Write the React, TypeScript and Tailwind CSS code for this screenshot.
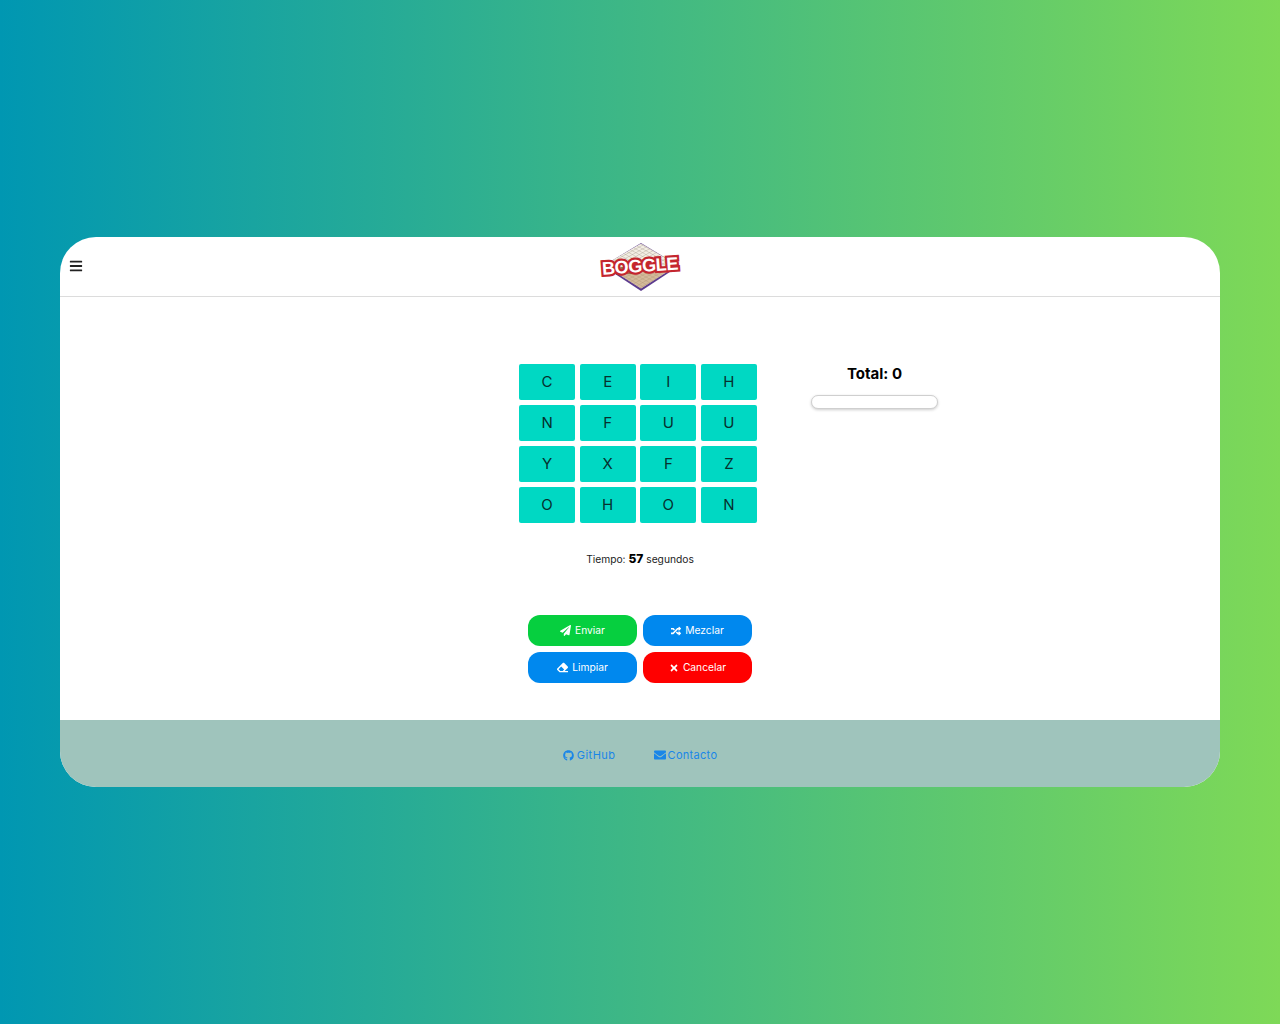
import { FaBars, FaEnvelope, FaEraser, FaGithub, FaPaperPlane, FaRandom, FaTimes } from 'react-icons/fa'

const letters = ['C', 'E', 'I', 'H', 'N', 'F', 'U', 'U', 'Y', 'X', 'F', 'Z', 'O', 'H', 'O', 'N']

function BoggleLogo() {
  return (
    <div className="relative h-[52px] w-[90px]">
      <svg width="90" height="52" viewBox="0 0 90 52" aria-hidden="true">
        <defs>
          <pattern id="weave" width="3.4" height="3.4" patternUnits="userSpaceOnUse" patternTransform="matrix(1 0.55 -1 0.55 0 0)">
            <rect width="3.4" height="3.4" fill="#f3eee4" />
            <path d="M0 0H3.4M0 0V3.4" stroke="#a89f90" strokeWidth="0.7" />
          </pattern>
        </defs>
        <polygon points="46,2 84,25 46,50 8,25" fill="#5c3b8e" />
        <polygon points="46,2.6 83,24 46,47.6 9,24" fill="url(#weave)" />
        <polygon points="14,27 78,27 46,47.6" fill="#b98f5f" opacity="0.55" />
        <polygon points="14,26 30,26 40,33 24,33" fill="#7d5230" opacity="0.7" />
      </svg>
      <span className="absolute inset-x-0 top-[14px] -rotate-[4deg] text-center font-['Liberation_Sans',sans-serif] text-[18px] leading-[22px] font-bold tracking-[-0.3px] text-white [-webkit-text-stroke:4.5px_#c4262e] [paint-order:stroke_fill]">
        BOGGLE
      </span>
    </div>
  )
}

export default function App() {
  return (
    <div className="flex min-h-[1024px] items-center justify-center bg-[linear-gradient(90deg,#0097b2,#7ed957)] px-[60px] font-['Inter',sans-serif] text-black">
      <div className="flex h-[550px] w-full flex-col overflow-hidden rounded-[36px] bg-white">
        <header className="relative flex h-[60px] shrink-0 items-center justify-center border-b border-[#dcdcdc]">
          <button className="absolute left-[9px] top-[22px] text-[#222]">
            <FaBars className="h-[14px] w-[14px]" />
          </button>
          <BoggleLogo />
        </header>

        <main className="grid flex-1 grid-cols-[1fr_242px_1fr] pt-[67px]">
          <div />
          <div>
            <div className="grid w-[238px] grid-cols-4 gap-x-[4.5px] gap-y-[5px]">
              {letters.map((letter, index) => (
                <div
                  key={index}
                  className="flex h-9 items-center justify-center rounded-[2px] bg-[#00d8c3] pt-px text-[15px] text-[#06302e]"
                >
                  {letter}
                </div>
              ))}
            </div>
            <p className="mt-[28px] h-4 text-center text-[10.25px] leading-4 text-[#222]">
              Tiempo: <strong className="text-[12px] font-extrabold text-black">57</strong> segundos
            </p>
            <div className="mx-auto mt-[48px] grid w-[224px] grid-cols-2 gap-x-[6px] gap-y-[6px]">
              <button className="flex h-[31px] items-center justify-center gap-1 rounded-xl bg-[#06cf3f] text-[10.25px] text-white">
                <FaPaperPlane className="h-[11px] w-[11px]" /> Enviar
              </button>
              <button className="flex h-[31px] items-center justify-center gap-1 rounded-xl bg-[#0088ee] text-[10.25px] text-white">
                <FaRandom className="h-[10px] w-[10px]" /> Mezclar
              </button>
              <button className="flex h-[31px] items-center justify-center gap-1 rounded-xl bg-[#0088ee] text-[10.25px] text-white">
                <FaEraser className="h-[11px] w-[11px]" /> Limpiar
              </button>
              <button className="flex h-[31px] items-center justify-center gap-1 rounded-xl bg-[#ff0000] text-[10.25px] text-white">
                <FaTimes className="h-[10px] w-[10px]" /> Cancelar
              </button>
            </div>
          </div>
          <div className="pl-[50px]">
            <div className="w-[127px]">
              <h3 className="text-center text-[15px] leading-5 font-bold">Total: 0</h3>
              <div className="mt-[11px] h-[14px] rounded-lg border border-[#cfcfcf] bg-white shadow-[0_1px_3px_rgba(0,0,0,0.2)]" />
            </div>
          </div>
        </main>

        <footer className="flex h-[67px] shrink-0 items-center justify-center gap-[38px] bg-[#9fc4bc] pt-[3px] text-[11px] tracking-[0.5px] text-[#1a86e8]">
          <a className="flex items-center gap-[3px]">
            <FaGithub className="h-[11px] w-[11px]" /> GitHub
          </a>
          <a className="flex items-center gap-[2px] tracking-[0.3px]">
            <FaEnvelope className="h-[12px] w-[12px]" /> Contacto
          </a>
        </footer>
      </div>
    </div>
  )
}
